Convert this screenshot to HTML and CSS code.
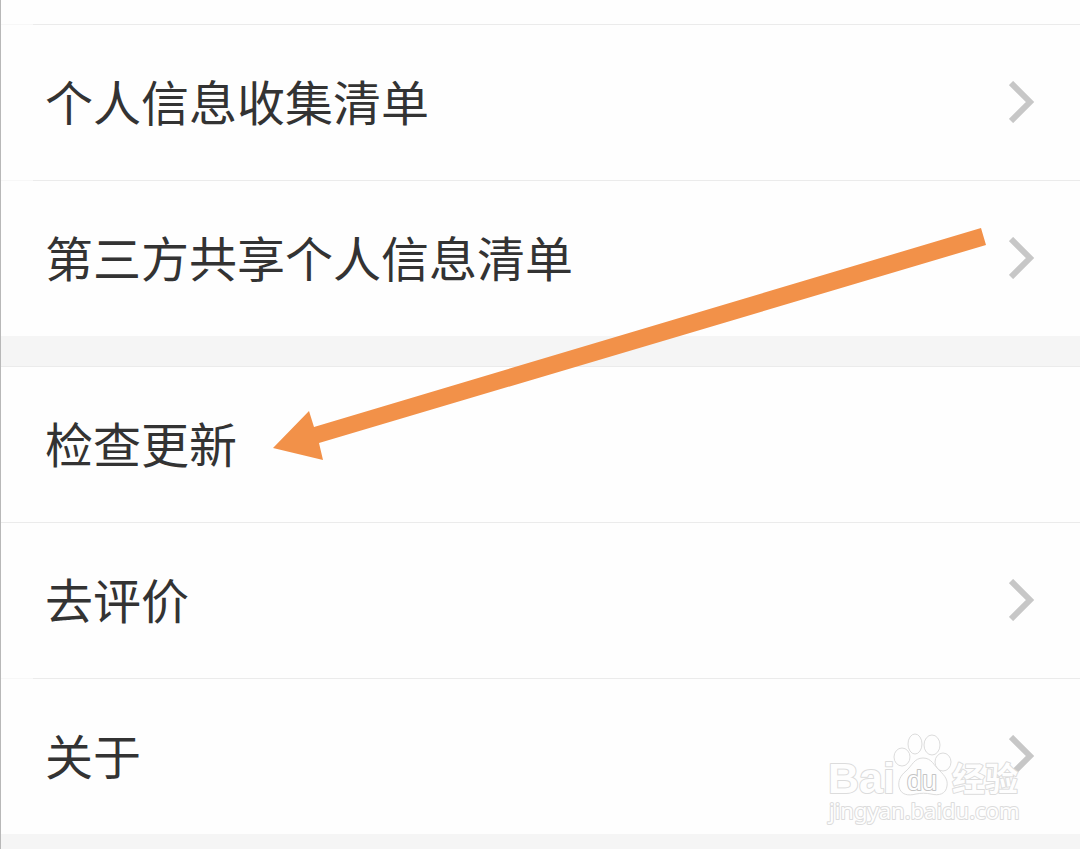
FILE: index.html
```html
<!DOCTYPE html>
<html lang="zh-CN">
<head>
  <meta charset="UTF-8">
  <meta name="viewport" content="width=device-width, initial-scale=1.0">
  <title>设置</title>
  <link rel="stylesheet" href="styles.css">
</head>
<body>
  <main class="settings">
    <div class="list-end"></div>

    <nav class="group">
      <a class="row" href="#collect">
        <span class="label">个人信息收集清单</span>
        <svg class="chevron" viewBox="0 0 26 42"><path d="M2 2L21 21L2 40"/></svg>
      </a>
      <a class="row" href="#share">
        <span class="label">第三方共享个人信息清单</span>
        <svg class="chevron" viewBox="0 0 26 42"><path d="M2 2L21 21L2 40"/></svg>
      </a>
    </nav>

    <nav class="group">
      <a class="row row-full" href="#update">
        <span class="label">检查更新</span>
      </a>
      <a class="row row-full" href="#rate">
        <span class="label">去评价</span>
        <svg class="chevron" viewBox="0 0 26 42"><path d="M2 2L21 21L2 40"/></svg>
      </a>
      <a class="row" href="#about">
        <span class="label">关于</span>
        <svg class="chevron" viewBox="0 0 26 42"><path d="M2 2L21 21L2 40"/></svg>
      </a>
    </nav>

    <!-- arrow pointing at the update row -->
    <svg class="arrow" viewBox="0 0 714 234">
      <path d="M0 220L36 183L41 199L708 0L713 17L46 215L50 232Z"/>
    </svg>

    <svg class="watermark" viewBox="0 0 200 96">
      <g class="paw">
        <ellipse cx="76" cy="24" rx="8" ry="9"/>
        <ellipse cx="89" cy="11" rx="7" ry="10"/>
        <ellipse cx="106" cy="12" rx="8" ry="10"/>
        <ellipse cx="117" cy="29" rx="8" ry="9"/>
        <path d="M97 25C88 25 86 33 80 38C74 43 72 48 73 54C75 62 82 63 90 61C95 60 100 60 105 61C113 63 120 61 121 53C122 47 119 43 114 38C108 33 106 25 97 25Z"/>
      </g>
      <text class="mark-name" x="2" y="60">Bai</text>
      <text class="mark-du" x="81" y="57">du</text>
      <text class="mark-cn" x="126" y="58">经验</text>
      <text class="mark-url" x="3" y="86">jingyan.baidu.com</text>
    </svg>
  </main>
</body>
</html>
```
FILE: styles.css
```css
* {
  box-sizing: border-box;
}
body {
  margin: 0;
  background-color: #f5f5f5;
  color: #333;
  font-family: "Noto Sans CJK SC", sans-serif;
}
.settings {
  position: relative;
  display: flex;
  flex-direction: column;
  min-height: 100vh;
  border-left: 1px solid #b8b8b8;
}
.list-end {
  height: 24px;
  background-color: #fefefe;
}
.group + .group {
  margin-top: 30px;
}
.row {
  display: flex;
  align-items: center;
  justify-content: space-between;
  height: 156px;
  padding: 0 45px 0 44px;
  background: linear-gradient(90deg, #f7f7f7 32px, #ebebeb 32px) top / 100% 1px no-repeat #fefefe;
  color: inherit;
  font-size: 48px;
  line-height: 72px;
  text-decoration: none;
}
.row-full {
  background-image: linear-gradient(#ebebeb, #ebebeb);
}
.label {
  padding-bottom: 4px;
}
.chevron {
  width: 26px;
  height: 42px;
  fill: none;
  stroke: #c7c7c7;
  stroke-width: 6;
}
.arrow {
  position: absolute;
  top: 228px;
  left: 272px;
  width: 714px;
  height: 234px;
  fill: #f29149;
}
.watermark {
  position: absolute;
  top: 733px;
  right: 54px;
  width: 200px;
  height: 96px;
  fill: #fefefe;
  stroke: #dcdcdc;
  stroke-width: 1;
}
.watermark text {
  paint-order: stroke;
  stroke-width: 2;
  stroke-linejoin: round;
}
.mark-name {
  font: bold 43px "Liberation Sans", sans-serif;
}
.watermark .mark-du {
  font: 27px "Liberation Sans", sans-serif;
  stroke: #c4c4c4;
}
.mark-cn {
  font: bold 33px "Noto Sans CJK SC", sans-serif;
}
.mark-url {
  font: 22px "Noto Sans", sans-serif;
}
```
